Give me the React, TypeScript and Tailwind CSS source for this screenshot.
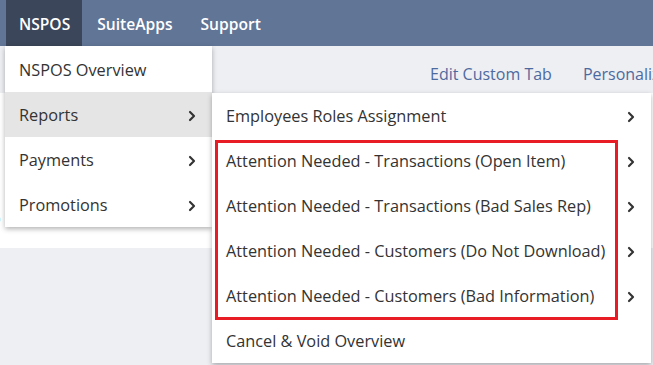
import { ChevronRight } from "lucide-react"

const mainItems = [
  { label: "NSPOS Overview", sub: false },
  { label: "Reports", sub: true, active: true },
  { label: "Payments", sub: true },
  { label: "Promotions", sub: true },
]

const reportItems = [
  { label: "Employees Roles Assignment", sub: true },
  { label: "Attention Needed - Transactions (Open Item)", sub: true },
  { label: "Attention Needed - Transactions (Bad Sales Rep)", sub: true },
  { label: "Attention Needed - Customers (Do Not Download)", sub: true },
  { label: "Attention Needed - Customers (Bad Information)", sub: true },
  { label: "Cancel & Void Overview", sub: false },
]

function Row({ label, sub, active }: { label: string; sub?: boolean; active?: boolean }) {
  return (
    <div
      className={`flex h-[45px] items-center justify-between pl-[14px] pr-[12px] pt-[2px] text-[16.3px] text-[#333] ${
        active ? "bg-[#e5e5e5]" : "bg-white"
      }`}
    >
      <span className="whitespace-nowrap">{label}</span>
      {sub && <ChevronRight size={16} strokeWidth={3.2} className="text-[#333]" />}
    </div>
  )
}

export default function App() {
  return (
    <div className="relative h-[365px] w-[653px] overflow-hidden bg-[#eeeff3] font-['Open_Sans',sans-serif]">
      <nav className="flex h-[46px] items-stretch bg-[#617596] pl-[6px] text-[15.6px] font-semibold text-white">
        <div className="flex items-center bg-[#3b465a] pl-[13px] pr-[12px] pt-[3px]">NSPOS</div>
        <div className="flex items-center px-[15px] pt-[3px]">SuiteApps</div>
        <div className="flex items-center px-[13px] pt-[3px]">Support</div>
      </nav>

      <div className="flex h-[47px] items-center gap-[31px] pl-[430px] pt-[9px] text-[16px] text-[#4d6aa0]">
        <span className="whitespace-nowrap">Edit Custom Tab</span>
        <span className="whitespace-nowrap">Personalize</span>
      </div>

      <div className="h-[155px] bg-white pt-[113px] text-[16px] text-[#4d6aa0]">
        <span className="-ml-[9px]">p</span>
      </div>

      <div className="absolute left-[5px] top-[46px] w-[207px] bg-white pt-[1px] shadow-[0_2px_5px_rgba(0,0,0,0.3)]">
        {mainItems.map((item) => (
          <Row key={item.label} {...item} />
        ))}
      </div>

      <div className="absolute left-[212px] top-[93px] w-[439px] bg-white shadow-[0_2px_5px_rgba(0,0,0,0.3)]">
        {reportItems.map((item) => (
          <Row key={item.label} {...item} />
        ))}
        <div className="absolute left-[3px] top-[47px] h-[180px] w-[403px] border-[3px] border-[#e81c24]" />
      </div>
    </div>
  )
}
